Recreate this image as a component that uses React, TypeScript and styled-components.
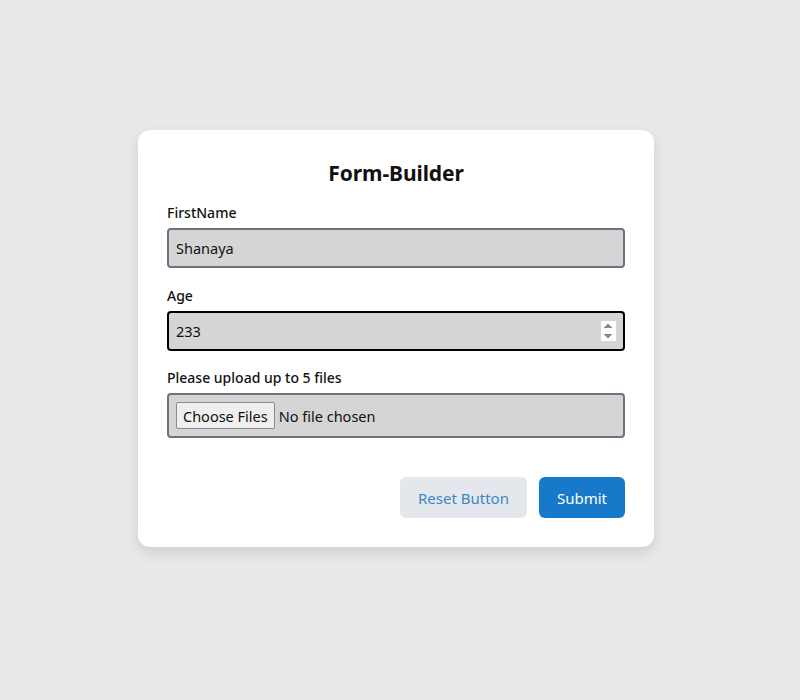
import React from "react";
import styled, { createGlobalStyle } from "styled-components";

const Global = createGlobalStyle`
  html, body { margin: 0; padding: 0; }
  body {
    background: #e9e9eb;
    font-family: "Noto Sans", "Open Sans", sans-serif;
    color: #111;
  }
`;

const Page = styled.div`
  min-height: 700px;
  padding: 130px 0 0 138px;
  box-sizing: border-box;
`;

const Card = styled.form`
  width: 516px;
  box-sizing: border-box;
  background: #fff;
  border-radius: 12px;
  padding: 29px 29px 29px 29px;
  box-shadow: 0 6px 14px rgba(0, 0, 0, 0.12);
  display: flex;
  flex-direction: column;
`;

const Title = styled.h1`
  margin: 0 0 16px;
  font-size: 21px;
  line-height: 28px;
  font-weight: 700;
  text-align: center;
  letter-spacing: -0.1px;
  color: #111;
`;

const Field = styled.div<{ $gap: number }>`
  display: flex;
  flex-direction: column;
  gap: 5px;
  margin-bottom: ${(p) => p.$gap}px;
`;

const Label = styled.label`
  font-size: 14px;
  line-height: 20px;
  font-weight: 500;
  color: #111;
`;

const Input = styled.input<{ $focused?: boolean }>`
  box-sizing: border-box;
  width: 100%;
  height: 40px;
  background: #d5d5d5;
  border: 2px solid ${(p) => (p.$focused ? "#000" : "#6b7280")};
  border-radius: 4px;
  padding: 0 7px;
  font-family: inherit;
  font-size: 14.5px;
  color: #111;
  outline: none;
  &:focus { border-color: #000; outline: none; }
`;

const FileBox = styled.div`
  box-sizing: border-box;
  height: 45px;
  background: #d5d5d5;
  border: 2px solid #6b7280;
  border-radius: 4px;
  padding: 0 7px;
  display: flex;
  align-items: center;
`;

const FileInput = styled.input`
  font-family: inherit;
  font-size: 14.5px;
  color: #111;
  &::file-selector-button {
    font-family: inherit;
    font-size: 14.5px;
    color: #111;
    background: #efefef;
    border: 1px solid #8a8a8a;
    border-radius: 2px;
    height: 27px;
    padding: 0 6px;
    margin-right: 4px;
  }
`;

const Actions = styled.div`
  display: flex;
  justify-content: flex-end;
  gap: 12px;
  margin-top: 39px;
`;

const Button = styled.button<{ $primary?: boolean }>`
  height: 41px;
  padding: 0 18px;
  border: none;
  border-radius: 6px;
  font-family: inherit;
  font-size: 15px;
  font-weight: 400;
  cursor: pointer;
  background: ${(p) => (p.$primary ? "#1679c9" : "#e4e7eb")};
  color: ${(p) => (p.$primary ? "#fff" : "#3b88c3")};
`;

export default function App() {
  return (
    <>
      <Global />
      <Page>
        <Card onSubmit={(e) => e.preventDefault()}>
          <Title>Form-Builder</Title>
          <Field $gap={18}>
            <Label htmlFor="fn">FirstName</Label>
            <Input id="fn" type="text" defaultValue="Shanaya" />
          </Field>
          <Field $gap={17}>
            <Label htmlFor="age">Age</Label>
            <Input id="age" type="number" defaultValue="233" $focused autoFocus />
          </Field>
          <Field $gap={0}>
            <Label htmlFor="files">Please upload up to 5 files</Label>
            <FileBox>
              <FileInput id="files" type="file" multiple />
            </FileBox>
          </Field>
          <Actions>
            <Button type="reset">Reset Button</Button>
            <Button type="submit" $primary>Submit</Button>
          </Actions>
        </Card>
      </Page>
    </>
  );
}
